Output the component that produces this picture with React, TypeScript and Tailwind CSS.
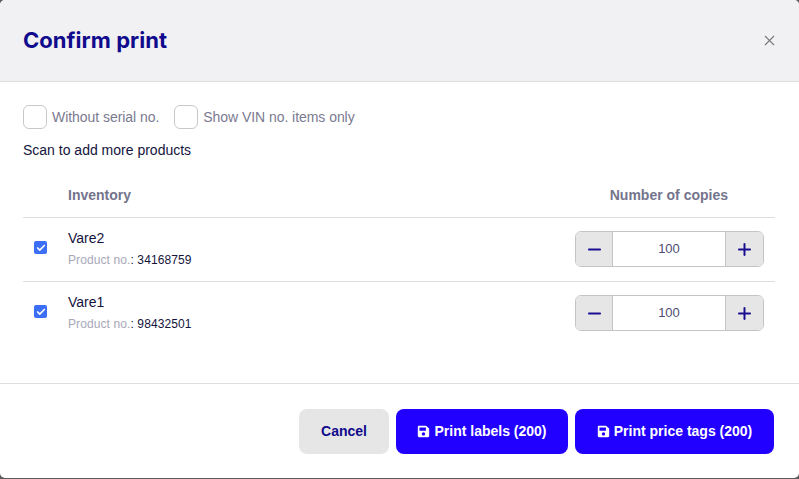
import { FaSave } from "react-icons/fa";
import { X, Minus, Plus, Check } from "lucide-react";

const items = [
  { name: "Vare2", no: "34168759" },
  { name: "Vare1", no: "98432501" },
];

function Stepper() {
  return (
    <div className="mb-[1px] flex h-[36px] w-[189px] overflow-hidden rounded-[6px] border border-[#c4c4c6]">
      <div className="flex w-[37px] items-center justify-center border-r border-[#c4c4c6] bg-[#e6e6e6] text-[#1a0f91]">
        <Minus size={19} strokeWidth={2.5} />
      </div>
      <div className="flex flex-1 items-center justify-center bg-white text-[13px] text-[#4d4d72]">100</div>
      <div className="flex w-[38px] items-center justify-center border-l border-[#c4c4c6] bg-[#e6e6e6] text-[#1a0f91]">
        <Plus size={19} strokeWidth={2.5} />
      </div>
    </div>
  );
}

export default function App() {
  return (
    <div className="h-[479px] w-[799px] overflow-hidden bg-[#5c5c5c] font-['Liberation_Sans',sans-serif]">
      <div className="flex h-[478px] flex-col overflow-hidden rounded-[5px] bg-white">
        {/* Header */}
        <div className="flex h-[82px] items-center justify-between border-b border-[#dedee0] bg-[#f1f1f4] pl-[23px] pr-[21px]">
          <h1 className="font-['Inter',sans-serif] text-[22px] font-bold tracking-[0.05px] text-[#100a8c]">Confirm print</h1>
          <X size={17} strokeWidth={1.5} className="text-[#77777c]" />
        </div>

        {/* Body */}
        <div className="flex-1 pl-[23px] pr-[24px] pt-[23px]">
          <div className="flex items-center text-[14px] tracking-[-0.05px] text-[#7a7a90]">
            <span className="h-6 w-6 rounded-[6px] border border-[#c8c8cc] bg-white" />
            <span className="ml-[5px]">Without serial no.</span>
            <span className="ml-[15px] h-6 w-6 rounded-[6px] border border-[#c8c8cc] bg-white" />
            <span className="ml-[5px]">Show VIN no. items only</span>
          </div>
          <p className="mt-[12px] text-[14px] leading-[18px] text-[#14143c]">Scan to add more products</p>

          <div className="mt-[26px] flex h-[33px] items-center border-b border-[#dedee0] pb-[11px] text-[14px] font-bold text-[#74748c]">
            <span className="ml-[45px] flex-1">Inventory</span>
            <span className="mr-[47px]">Number of copies</span>
          </div>
          {items.map((item, i) => (
            <div key={item.name} className={`flex h-[64px] items-center border-b pl-[11px] pr-[11px] ${i === 0 ? "border-[#dedee0]" : "border-transparent"}`}>
              <span className="mb-[4px] flex h-[13px] w-[13px] items-center justify-center rounded-[2px] bg-[#3b6ff5] text-white">
                <Check size={10} strokeWidth={4} />
              </span>
              <div className="mb-[2px] ml-[21px] flex-1">
                <div className="text-[14px] leading-[16px] text-[#14143c]">{item.name}</div>
                <div className="mt-[7px] text-[12px] leading-[14px] tracking-[0.1px] text-[#14143c]">
                  <span className="text-[#a8a8b8]">Product no.</span>: {item.no}
                </div>
              </div>
              <Stepper />
            </div>
          ))}
        </div>

        {/* Footer */}
        <div className="flex h-[95px] justify-end gap-[7px] border-t border-[#dedee0] pr-[25px] pt-[25px] text-[14px] font-bold">
          <button className="h-[45px] w-[90px] rounded-[8px] bg-[#e6e6e6] text-[#100a8c]">Cancel</button>
          <button className="flex h-[45px] w-[172px] items-center justify-center gap-[4px] rounded-[8px] bg-[#2200ff] text-white">
            <FaSave size={13} />
            Print labels (200)
          </button>
          <button className="flex h-[45px] w-[199px] items-center justify-center gap-[4px] rounded-[8px] bg-[#2200ff] text-white">
            <FaSave size={13} />
            Print price tags (200)
          </button>
        </div>
      </div>
    </div>
  );
}
